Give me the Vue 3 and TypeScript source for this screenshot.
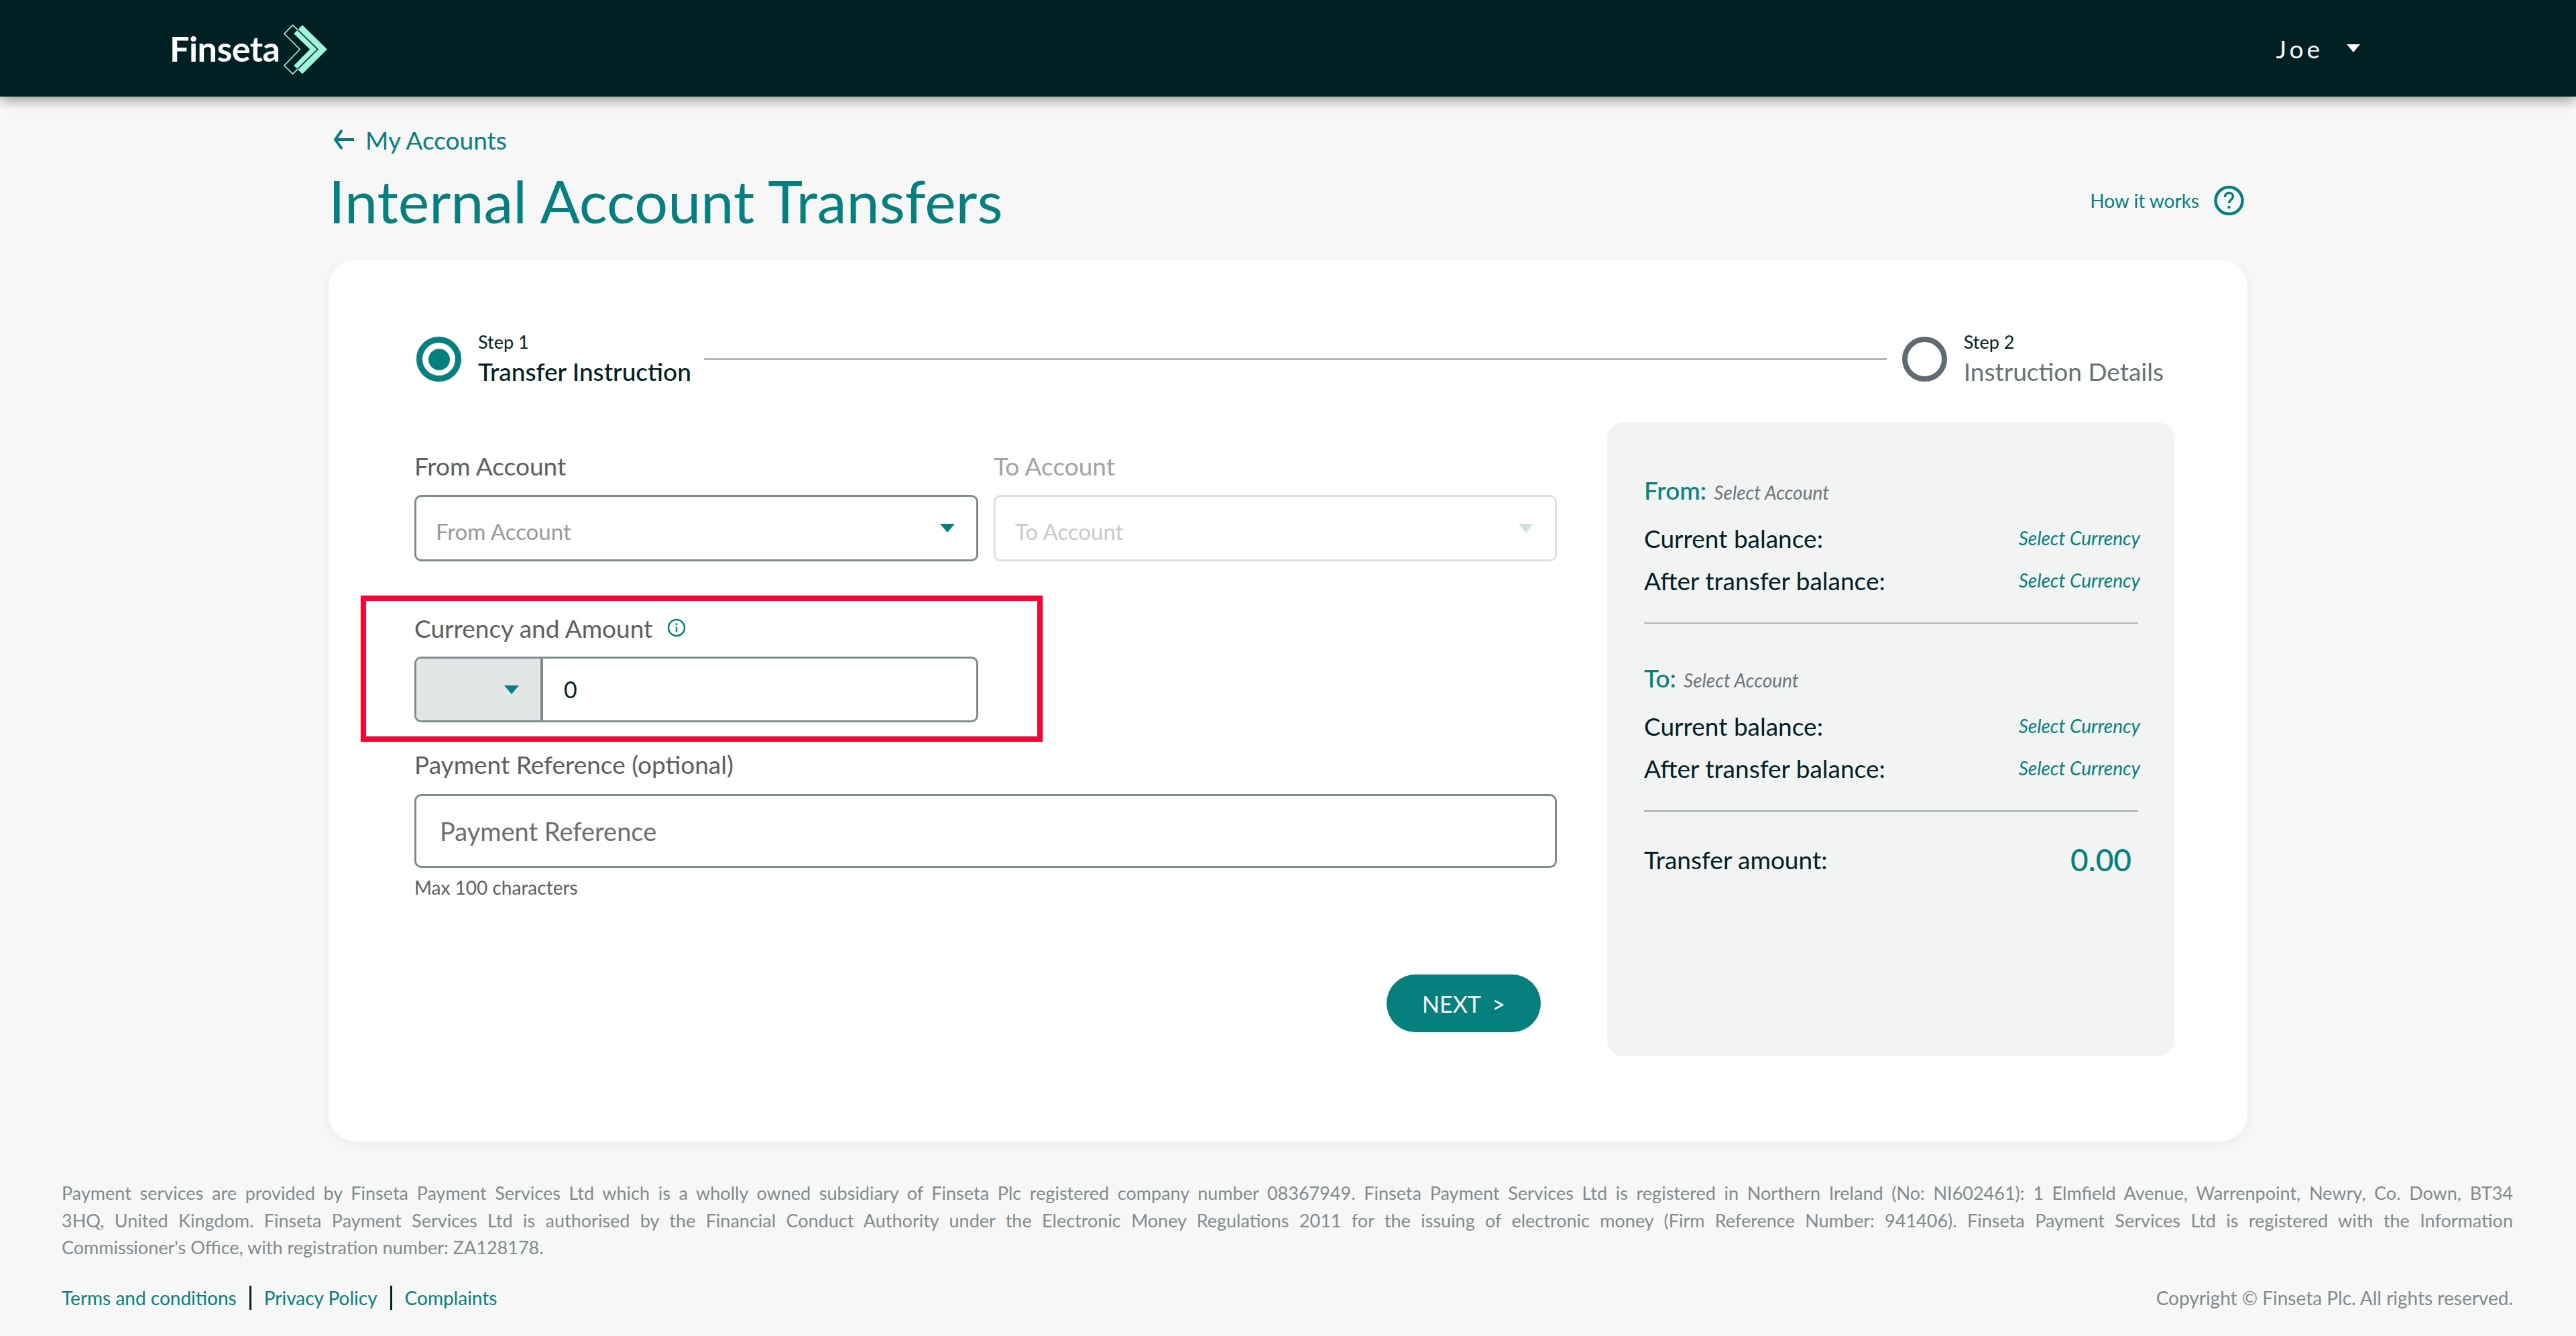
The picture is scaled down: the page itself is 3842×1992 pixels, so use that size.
<script setup lang="ts">
interface Row { label: string; value: string }
const rows: Row[] = [
  { label: 'Current balance:', value: 'Select Currency' },
  { label: 'After transfer balance:', value: 'Select Currency' },
]
const legal: string[] = [
  'Payment services are provided by Finseta Payment Services Ltd which is a wholly owned subsidiary of Finseta Plc registered company number 08367949. Finseta Payment Services Ltd is registered in Northern Ireland (No: NI602461): 1 Elmfield Avenue, Warrenpoint, Newry, Co. Down, BT34',
  '3HQ, United Kingdom. Finseta Payment Services Ltd is authorised by the Financial Conduct Authority under the Electronic Money Regulations 2011 for the issuing of electronic money (Firm Reference Number: 941406). Finseta Payment Services Ltd is registered with the Information',
  "Commissioner's Office, with registration number: ZA128178.",
]
</script>

<template>
  <div class="page">
    <header class="topbar">
      <div class="logo">
        <span class="logo-text">Finseta</span>
        <svg class="logo-mark" viewBox="600 60 220 250" width="73" height="83">
          <defs>
            <clipPath id="solid"><path d="M655 115 693 76 805 185 693 296 655 258 727 185Z" /></clipPath>
          </defs>
          <path d="M655 115 693 76 805 185 693 296 655 258 727 185Z" fill="#9ff5dc" />
          <path d="M650 76 762 185 650 296 612 258 682 185 612 115Z" fill="none" stroke="#9ff5dc" stroke-width="5" />
          <path d="M650 76 762 185 650 296 612 258 682 185 612 115Z" fill="none" stroke="#012024" stroke-width="5" clip-path="url(#solid)" />
        </svg>
      </div>
      <div class="user">
        <span class="user-name">Joe</span>
        <span class="caret caret-white"></span>
      </div>
    </header>

    <main class="main">
      <a class="crumb">
        <svg width="32" height="30" viewBox="0 0 32 30" fill="none" stroke="#05807e" stroke-width="4">
          <path d="M13 1 3 15l10 14M3 15h28" />
        </svg>
        <span>My Accounts</span>
      </a>
      <div class="title-row">
        <h1 class="title">Internal Account Transfers</h1>
        <a class="how">
          <span>How it works</span>
          <svg width="45" height="46" viewBox="0 0 45 46" fill="none" stroke="#05807e" stroke-width="4.5">
            <circle cx="22.5" cy="23" r="20" />
            <path d="M16.5 18c0-4 2.7-6.5 6-6.5s6 2.3 6 5.5c0 4.5-6 5-6 10" stroke-width="3.5" />
            <circle cx="22.5" cy="33" r="2.2" fill="#05807e" stroke="none" />
          </svg>
        </a>
      </div>

      <section class="card">
        <div class="stepper">
          <div class="step">
            <span class="radio radio-on"><span class="dot"></span></span>
            <div class="step-text">
              <div class="step-num">Step 1</div>
              <div class="step-name">Transfer Instruction</div>
            </div>
          </div>
          <div class="step-line"></div>
          <div class="step">
            <span class="radio radio-off"></span>
            <div class="step-text">
              <div class="step-num">Step 2</div>
              <div class="step-name muted">Instruction Details</div>
            </div>
          </div>
        </div>

        <div class="body">
          <form class="form" @submit.prevent>
            <div class="two">
              <div>
                <label class="label">From Account</label>
                <div class="select">
                  <span class="ph">From Account</span>
                  <span class="caret caret-teal"></span>
                </div>
              </div>
              <div class="disabled">
                <label class="label label-off">To Account</label>
                <div class="select select-off">
                  <span class="ph ph-off">To Account</span>
                  <span class="caret caret-pale"></span>
                </div>
              </div>
            </div>

            <div class="currency-block">
              <label class="label">
                Currency and Amount
                <svg class="info" width="28" height="28" viewBox="0 0 28 28" fill="none" stroke="#05807e" stroke-width="2.5">
                  <circle cx="14" cy="14" r="12" />
                  <path d="M14 12.5v8" />
                  <circle cx="14" cy="8.5" r="1.6" fill="#05807e" stroke="none" />
                </svg>
              </label>
              <div class="amount">
                <div class="cur"><span class="caret caret-teal"></span></div>
                <div class="amt">0</div>
              </div>
              <div class="highlight"></div>
            </div>

            <label class="label pay-label">Payment Reference (optional)</label>
            <div class="pay-input">Payment Reference</div>
            <div class="hint">Max 100 characters</div>
            <button class="next" type="button">NEXT&nbsp; &gt;</button>
          </form>

          <aside class="panel">
            <div class="who"><b>From:</b> <i>Select Account</i></div>
            <div v-for="r in rows" :key="'f' + r.label" class="row">
              <span>{{ r.label }}</span><i>{{ r.value }}</i>
            </div>
            <div class="rule rule-a"></div>
            <div class="who who-to"><b>To:</b> <i>Select Account</i></div>
            <div v-for="r in rows" :key="'t' + r.label" class="row">
              <span>{{ r.label }}</span><i>{{ r.value }}</i>
            </div>
            <div class="rule rule-b"></div>
            <div class="total">
              <span>Transfer amount:</span><strong>0.00</strong>
            </div>
          </aside>
        </div>
      </section>
    </main>

    <footer class="footer">
      <div class="legal">
        <div v-for="(l, i) in legal" :key="i" :class="{ just: i < 2 }">{{ l }}</div>
      </div>
      <div class="foot-row">
        <div class="links">
          <a>Terms and conditions</a><span class="sep"></span>
          <a>Privacy Policy</a><span class="sep"></span>
          <a>Complaints</a>
        </div>
        <div class="copy">Copyright © Finseta Plc. All rights reserved.</div>
      </div>
    </footer>
  </div>
</template>

<style>
html, body { margin: 0; background: #f7f7f7; }
</style>

<style scoped>
.page {
  width: 3842px;
  height: 1992px;
  overflow: hidden;
  background: #f7f7f7;
  font-family: "Lato", "Liberation Sans", sans-serif;
  color: #012024;
}
.topbar {
  height: 144px;
  background: #012024;
  box-shadow: 0 4px 18px rgba(0, 0, 0, 0.45);
  display: flex;
  align-items: center;
  justify-content: space-between;
  padding: 0 322px 0 253px;
  position: relative;
}
.logo { display: flex; align-items: center; }
.logo-text { color: #fff; font-size: 52px; font-weight: 700; width: 167px; letter-spacing: -0.5px; }
.logo-mark { margin-top: 2px; }
.user { display: flex; align-items: center; gap: 35px; }
.user-name { color: #fff; font-size: 37px; letter-spacing: 5px; }
.caret { display: inline-block; width: 0; height: 0; border-left: 11px solid transparent; border-right: 11px solid transparent; }
.caret-white { border-top: 12px solid #fff; border-left-width: 10px; border-right-width: 10px; }
.caret-teal { border-top: 13px solid #05807e; }
.caret-pale { border-top: 13px solid #cfe1e3; }

.main { width: 2862px; margin-left: 490px; }
.crumb {
  display: flex;
  align-items: center;
  gap: 16px;
  margin: 44px 0 0 7px;
  height: 40px;
  color: #05807e;
  font-size: 37px;
}
.title-row { display: flex; align-items: center; justify-content: space-between; margin-top: 21px; padding-right: 5px; }
.title { margin: 0; font-size: 88px; line-height: 100px; font-weight: 400; color: #05807e; }
.how { display: flex; align-items: center; gap: 22px; color: #05807e; font-size: 28px; }

.card {
  margin-top: 38px;
  height: 1315px;
  box-sizing: border-box;
  background: #fff;
  border-radius: 40px;
  padding: 115px 109px 0 128px;
  box-shadow: 0 4px 16px rgba(0, 0, 0, 0.05);
}
.stepper { display: flex; align-items: center; height: 67px; padding-left: 3px; padding-right: 16px; }
.step { display: flex; align-items: center; gap: 25px; }
.step-line { flex: 1; height: 3px; background: #b3b7b7; margin: 0 23px 0 19px; }
.radio { width: 67px; height: 67px; box-sizing: border-box; border-radius: 50%; display: flex; align-items: center; justify-content: center; }
.radio-on { border: 9px solid #05807e; }
.radio-off { border: 8px solid #5f6b70; }
.dot { width: 32px; height: 32px; border-radius: 50%; background: #05807e; }
.step-text { height: 67px; }
.step-num { font-size: 27px; line-height: 32px; margin-top: -8px; }
.step-name { font-size: 37px; line-height: 44px; margin-top: 6px; font-weight: 500; }
.muted { color: #667277; font-weight: 400; }

.body { display: grid; grid-template-columns: 1704px 846px; column-gap: 75px; margin-top: 61px; }
.form { display: flex; flex-direction: column; padding-top: 44px; }
.two { display: grid; grid-template-columns: 841px 840px; column-gap: 23px; }
.label { display: flex; align-items: center; height: 40px; font-size: 37px; color: #5c5f60; }
.label-off { color: #a3a3a3; }
.select {
  margin-top: 24px;
  height: 99px;
  box-sizing: border-box;
  border: 3px solid #7f8c8c;
  border-radius: 10px;
  display: flex;
  align-items: center;
  justify-content: space-between;
  padding: 0 32px 0 29px;
  background: #fff;
}
.select-off { border-color: #dfe0e0; }
.ph { font-size: 33px; color: #9a9a9a; padding-top: 8px; }
.ph-off { color: #c9c9c9; }
.currency-block { margin-top: 79px; position: relative; }
.info { margin-left: 22px; }
.amount {
  margin-top: 23px;
  width: 841px;
  height: 98px;
  box-sizing: border-box;
  border: 3px solid #7f8c8c;
  border-radius: 10px;
  display: flex;
  overflow: hidden;
}
.cur {
  width: 189px;
  background: #e2e6e6;
  border-right: 4px solid #7f8c8c;
  display: flex;
  align-items: center;
  justify-content: flex-end;
  padding-right: 32px;
  box-sizing: border-box;
}
.amt { padding-left: 31px; font-size: 34px; line-height: 92px; color: #012024; }
.highlight {
  position: absolute;
  left: -80px;
  top: -28px;
  width: 1017px;
  height: 218px;
  box-sizing: border-box;
  border: 8px solid #ff0033;
  pointer-events: none;
}
.pay-label { margin-top: 42px; }
.pay-input {
  margin-top: 25px;
  height: 110px;
  box-sizing: border-box;
  border: 3px solid #7f8c8c;
  border-radius: 10px;
  padding-left: 35px;
  display: flex;
  align-items: center;
  font-size: 38px;
  color: #6e6e6e;
  background: #fff;
}
.hint { margin-top: 14px; font-size: 28px; line-height: 30px; color: #5c5f60; }
.next {
  align-self: flex-end;
  margin: 115px 24px 0 0;
  width: 230px;
  height: 86px;
  border: 0;
  border-radius: 43px;
  background: #05807e;
  color: #fff;
  font-family: inherit;
  font-size: 34px;
}

.panel {
  height: 945px;
  box-sizing: border-box;
  background: #f2f4f4;
  border-radius: 24px;
  padding: 81px 51px 0 55px;
}
.who { height: 40px; line-height: 40px; font-size: 28px; color: #6d7478; }
.who b { font-size: 37px; font-weight: 500; color: #05807e; margin-right: 4px; }
.who-to { margin-top: 61px; }
.row {
  display: flex;
  justify-content: space-between;
  align-items: center;
  height: 40px;
  margin-top: 23px;
  font-size: 37px;
  color: #012024;
}
.who + .row { margin-top: 31px; }
.row i { font-size: 28px; color: #05807e; }
.rule { background: #b3b7b7; margin-right: 3px; }
.rule-a { height: 2px; margin-top: 43px; }
.rule-b { height: 3px; margin-top: 43px; }
.total { display: flex; justify-content: space-between; align-items: center; height: 40px; margin-top: 50px; padding-right: 13px; font-size: 37px; }
.total strong { font-size: 46px; font-weight: 500; color: #05807e; }

.footer { padding: 0 94px 0 92px; margin-top: 57px; }
.legal { font-size: 27px; line-height: 40.5px; color: #7f8c8c; }
.just { text-align: justify; text-align-last: justify; white-space: nowrap; }
.foot-row { display: flex; justify-content: space-between; align-items: center; height: 36px; margin-top: 36px; font-size: 28px; }
.links { display: flex; align-items: center; color: #05807e; }
.sep { width: 3px; height: 36px; background: #012024; margin: 0 19px; }
.copy { color: #7f8c8c; }
</style>
